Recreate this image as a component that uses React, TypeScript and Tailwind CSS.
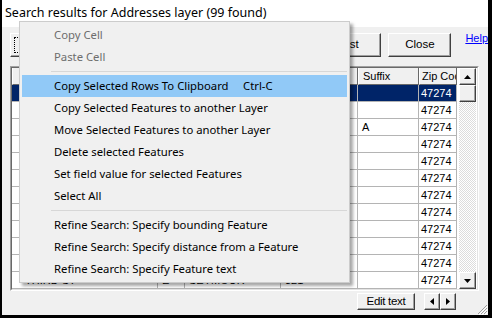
import React from "react";

const rows = [
  ["", "", "", "", "", "47274"],
  ["", "", "", "", "", "47274"],
  ["", "", "", "", "A", "47274"],
  ["", "", "", "", "", "47274"],
  ["", "", "", "", "", "47274"],
  ["", "", "", "", "", "47274"],
  ["", "", "", "", "", "47274"],
  ["", "", "", "", "", "47274"],
  ["", "", "", "", "", "47274"],
  ["", "", "", "", "", "47274"],
  ["", "", "", "", "", "47274"],
  ["THIRD ST", "E", "SEYMOUR", "321", "", "47274"],
];

const cols = [
  { label: "", w: "w-[146px]", pad: "pl-[13px]" },
  { label: "", w: "w-[27px]", pad: "pl-[4px]" },
  { label: "", w: "w-[96px]", pad: "pl-[4px]" },
  { label: "", w: "w-[77px]", pad: "pl-[4px]" },
  { label: "Suffix", w: "w-[61px]", pad: "pl-[4px]" },
  { label: "Zip Code", w: "w-[38px]", pad: "pl-[2px]" },
];

const btn =
  "flex items-center justify-center bg-[#f0f0f0] border border-t-white border-l-white border-r-[#404040] border-b-[#404040] shadow-[inset_-1px_-1px_0_#a0a0a0] text-[11.5px] text-black";

function Tri({ dir }: { dir: "up" | "down" | "left" | "right" }) {
  const pts = {
    up: "0,4 7,4 3.5,0",
    down: "0,0 7,0 3.5,4",
    left: "4,0 4,7 0,3.5",
    right: "0,0 0,7 4,3.5",
  }[dir];
  const horiz = dir === "up" || dir === "down";
  return (
    <svg width={horiz ? 7 : 4} height={horiz ? 4 : 7} viewBox={horiz ? "0 0 7 4" : "0 0 4 7"}>
      <polygon points={pts} fill="#000" />
    </svg>
  );
}

type Item = { label?: string; key?: string; disabled?: boolean; active?: boolean; sep?: boolean };

const menu: Item[] = [
  { label: "Copy Cell", disabled: true },
  { label: "Paste Cell", disabled: true },
  { sep: true },
  { label: "Copy Selected Rows To Clipboard", key: "Ctrl-C", active: true },
  { label: "Copy Selected Features to another Layer" },
  { label: "Move Selected Features to another Layer" },
  { label: "Delete selected Features" },
  { label: "Set field value for selected Features" },
  { label: "Select All" },
  { sep: true },
  { label: "Refine Search: Specify bounding Feature" },
  { label: "Refine Search: Specify distance from a Feature" },
  { label: "Refine Search: Specify Feature text" },
];

export default function App() {
  return (
    <div className="relative w-[492px] h-[318px] overflow-hidden bg-white border-l-2 border-r-4 border-b-[3px] border-black flex flex-col">
      {/* title */}
      <div className="h-[27px] shrink-0 pl-[3px] pt-[4px] text-[12.5px] leading-[18px] text-black font-['Noto_Sans',sans-serif]">
        Search results for Addresses layer (99 found)
      </div>

      {/* panel */}
      <div className="flex-1 bg-[#f0f0f0] flex flex-col pl-[8px] font-['Liberation_Sans',Arial,sans-serif]">
        {/* toolbar */}
        <div className="h-[24px] mt-[6px] shrink-0 flex items-start">
          <div className={`${btn} w-[70px] h-[24px]`}>
            <span className="w-[62px] h-[16px] border border-dotted border-black" />
          </div>
          <div className="flex-1" />
          <div className={`${btn} w-[63px] h-[24px]`}>List</div>
          <div className={`${btn} w-[63px] h-[24px] ml-[7px]`}>Close</div>
          <a className="ml-[14px] -mt-[3px] text-[11px] text-[#0000ff] underline">Help</a>
        </div>

        {/* grid */}
        <div className="mt-[9px] w-[469px] h-[225px] shrink-0 border border-t-[#a0a0a0] border-l-[#a0a0a0] border-r-white border-b-white">
          <div className="w-full h-full border border-t-[#696969] border-l-[#696969] border-r-[#e3e3e3] border-b-[#e3e3e3] bg-white flex">
            <div className="w-[445px] overflow-hidden text-[11px]">
              <div className="flex h-[17px] bg-[#f0f0f0]">
                {cols.map((c, j) => (
                  <div
                    key={j}
                    className={`${c.w} shrink-0 ${c.pad} whitespace-nowrap overflow-hidden leading-[16px] border-r border-b border-r-[#696969] border-b-[#696969] border-l border-l-white`}
                  >
                    {c.label}
                  </div>
                ))}
              </div>
              {rows.map((r, i) => (
                <div
                  key={i}
                  className={`flex h-[17px] ${i === 0 ? "bg-[#002468] text-white" : "text-black"}`}
                >
                  {r.map((v, j) => (
                    <div
                      key={j}
                      className={`${cols[j].w} shrink-0 ${cols[j].pad} whitespace-nowrap overflow-hidden leading-[16px] border-r border-b border-[#b4b4b4]`}
                    >
                      {v}
                    </div>
                  ))}
                </div>
              ))}
            </div>
            {/* scrollbar */}
            <div className="w-[17px] ml-[2px] flex flex-col bg-[repeating-conic-gradient(#dcdcdc_0_25%,#ffffff_0_50%)] bg-[length:2px_2px]">
              <div className={`${btn} h-[17px]`}>
                <Tri dir="up" />
              </div>
              <div className={`${btn} h-[17px]`} />
              <div className="flex-1" />
              <div className={`${btn} h-[17px]`}>
                <Tri dir="down" />
              </div>
            </div>
          </div>
        </div>

        {/* bottom row */}
        <div className="flex items-start mt-[2px] h-[22px]">
          <div className="flex-1" />
          <div className={`${btn} w-[58px] h-[17px] tracking-[-0.3px]`}>Edit text</div>
          <div className={`${btn} w-[16px] h-[17px] ml-[9px]`}>
            <Tri dir="left" />
          </div>
          <div className={`${btn} w-[16px] h-[17px]`}>
            <Tri dir="right" />
          </div>
          <div className="w-[32px] h-[22px] flex items-end justify-end">
            <svg width="11" height="11" viewBox="0 0 11 11">
              <path d="M10 1 L1 10 M10 4 L4 10 M10 7 L7 10" stroke="#a0a0a0" strokeWidth="1" />
              <path d="M11 2 L2 11 M11 5 L5 11 M11 8 L8 11" stroke="#ffffff" strokeWidth="1" />
            </svg>
          </div>
        </div>
      </div>

      {/* context menu */}
      <div className="absolute left-[17px] top-[21px] w-[331px] bg-[#f0f0f0] border border-[#cccccc] shadow-[3px_3px_3px_rgba(0,0,0,0.35)] p-[2px] font-['Noto_Sans',sans-serif] text-[11.3px] text-black">
        {menu.map((m, i) =>
          m.sep ? (
            <div key={i} className="h-[7px] flex items-center pl-[29px]">
              <div className="h-px w-full bg-[#d7d7d7]" />
            </div>
          ) : (
            <div
              key={i}
              className={`h-[22px] flex items-center pl-[32px] whitespace-nowrap ${m.active ? "bg-[#91c9f7]" : ""} ${m.disabled ? "text-[#6d6d6d]" : ""}`}
            >
              <span className="w-[189px]">{m.label}</span>
              {m.key && <span>{m.key}</span>}
            </div>
          )
        )}
      </div>
    </div>
  );
}
